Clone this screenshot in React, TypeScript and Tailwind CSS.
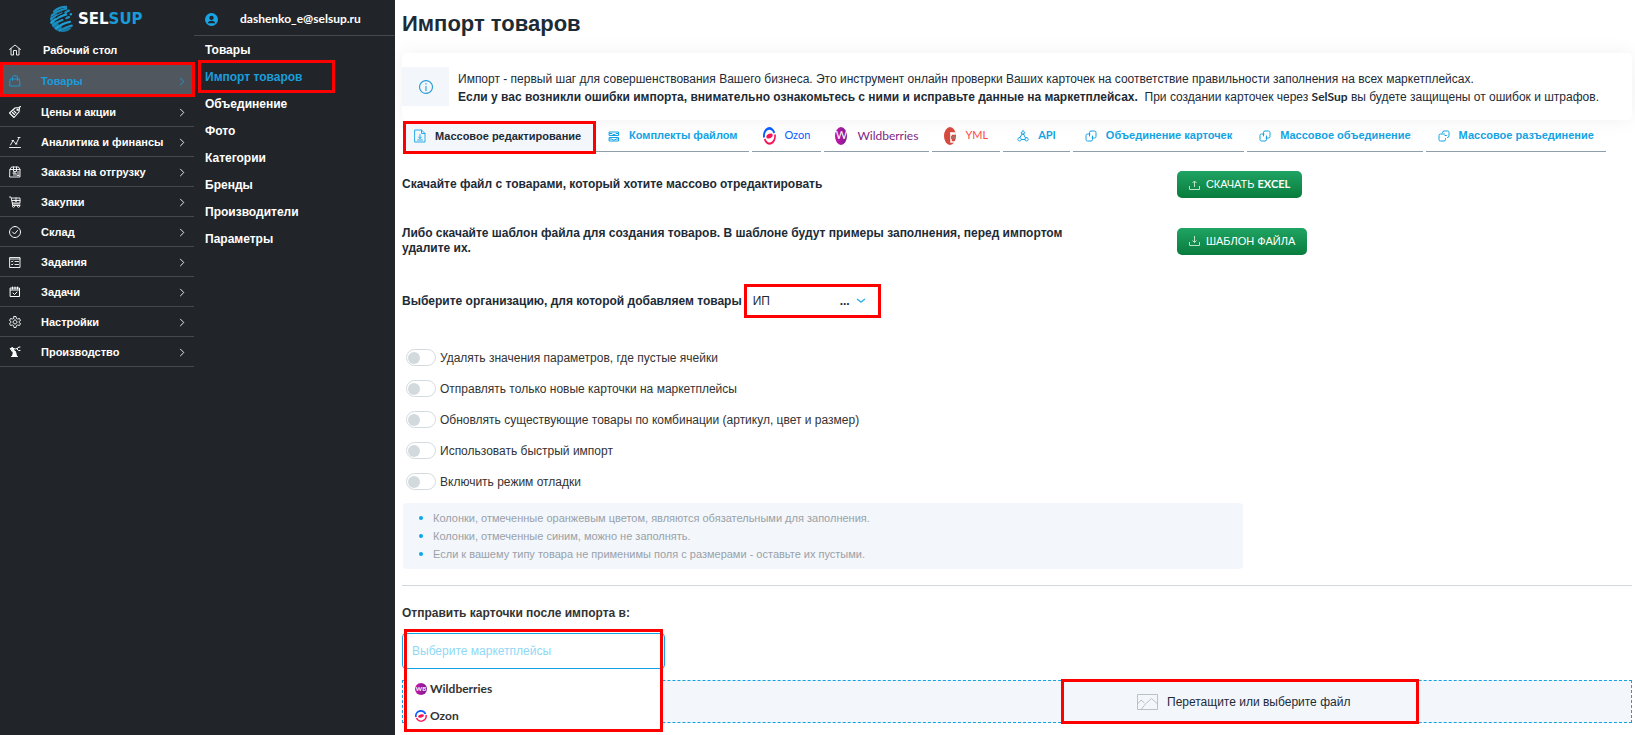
import { useState } from "react";
import type { ReactNode } from "react";

type MenuItem = { label: string; icon: ReactNode; active?: boolean };

function Icon({ children, className = "h-[12px] w-[12px]" }: { children: ReactNode; className?: string }) {
  return (
    <svg
      viewBox="0 0 24 24"
      className={className}
      fill="none"
      stroke="currentColor"
      strokeWidth="1.8"
      strokeLinecap="round"
      strokeLinejoin="round"
      aria-hidden="true"
    >
      {children}
    </svg>
  );
}

const menu: MenuItem[] = [
  {
    label: "Товары",
    active: true,
    icon: <path d="M3 8h18l1 14H2zM7 11V5a5 4 0 0 1 10 0v6" />,
  },
  {
    label: "Цены и акции",
    icon: <path d="M1 14 12 4l8-1 1 1-1 8-10 11zM16 6.500h2v2h-2zM7 13l4 4M10 10l4 4M20 3l3-2" strokeWidth="2.200" />,
  },
  {
    label: "Аналитика и финансы",
    icon: <path d="M1 23h22M3 18l5-9 6 7 6-12M6 9h3M13 16h3M18 3h4" />,
  },
  {
    label: "Заказы на отгрузку",
    icon: <path d="M2 7l3-5h14l3 5v15H2zM2 7h20M9 2v9h6V2M8 14h6v5M10 14v5M17 12h3M17 16h3M17 19h3" />,
  },
  {
    label: "Закупки",
    icon: <path d="M1 2h3l3 14h15M6 4h16v10H7M6 9h16M14 4v7M11 8l3 3 3-3M7 16v3h15M9 19a2 2 0 1 0 .1 0M19 19a2 2 0 1 0 .1 0" />,
  },
  {
    label: "Склад",
    icon: <path d="M12 1a11 11 0 1 0 .1 0M7 12l4 4 6-7" strokeWidth="2" />,
  },
  {
    label: "Задания",
    icon: <path d="M2 3h20v20H2zM2 6h20M5 11l1 1 2-2M5 17l1 1 2-2M12 11h7M12 17h7" />,
  },
  {
    label: "Задачи",
    icon: <path d="M3 4h18v17H3zM3 8h18M7 2v4M12 2v4M17 2v4M8 14l3 3 5-5" strokeWidth="2" />,
  },
  {
    label: "Настройки",
    icon: (
      <path d="M10 1h4l1 4 2 1 4-1 2 4-3 2v2l3 2-2 4-4-1-2 1-1 4h-4l-1-4-2-1-4 1-2-4 3-2v-2L1 9l2-4 4 1 2-1zM12 8a4 4 0 1 0 .1 0" />
    ),
  },
  {
    label: "Производство",
    icon: (
      <g strokeWidth="2">
        <path d="M5 21h12M7 20l2-8 4-1 2 9zM3 5l4-2 5 9-3 1z" fill="currentColor" />
        <path d="M6 4l7 2 3-1M22 2l-4 1-2 3 3 3h3" />
      </g>
    ),
  },
];

const subMenu = [
  "Товары",
  "Импорт товаров",
  "Объединение",
  "Фото",
  "Категории",
  "Бренды",
  "Производители",
  "Параметры",
];

const options = [
  "Удалять значения параметров, где пустые ячейки",
  "Отправлять только новые карточки на маркетплейсы",
  "Обновлять существующие товары по комбинации (артикул, цвет и размер)",
  "Использовать быстрый импорт",
  "Включить режим отладки",
];

const notes = [
  "Колонки, отмеченные оранжевым цветом, являются обязательными для заполнения.",
  "Колонки, отмеченные синим, можно не заполнять.",
  "Если к вашему типу товара не применимы поля с размерами - оставьте их пустыми.",
];

function Logo() {
  return (
    <a href="#" className="flex h-[35px] items-center pt-[2px] pl-[48px]" aria-label="SELSUP">
      <svg viewBox="0 0 28 30" className="h-[28px] w-[27px]" aria-hidden="true">
        <path d="M3 9C0 17 4 28 15 29c4 0 8-2 10-5l-9 1-5-5-6-3z" fill="#1779a5" />
        <g fill="none" stroke="#1c8fc0" strokeLinecap="round" strokeWidth="2.400">
          <path d="M6 7c4-4 8-5 13-5" />
          <path d="M4 11C9 6 14 5 19 4" />
          <path d="M3 15c5-5 8-6 11-7M18 8l4-2" />
          <path d="M3 19c5-5 9-7 16-9" stroke="#1c9fd4" />
          <path d="M5 22c4-4 6-5 10-6M19 14l3-1" />
          <path d="M8 25c5-4 9-6 15-7" stroke="#1c9fd4" />
          <path d="M12 27c5-3 8-4 13-5" />
        </g>
        <g fill="none" stroke="#212529" strokeWidth="1">
          <path d="M9 10c4-2 6-3 9-4" />
          <path d="M8 14c3-3 6-4 9-5" />
          <path d="M9 17c3-2 6-3 10-4" />
          <path d="M11 21c3-2 6-4 10-5" />
          <path d="M14 25c3-2 6-3 10-5" />
        </g>
        <circle cx="24" cy="10" r="1.300" fill="#1c9fd4" />
      </svg>
      <span className="pl-[3px] font-['DejaVu_Sans',sans-serif] text-[15px] leading-4 font-bold text-white">
        SEL<span className="text-[#189bd7]">SUP</span>
      </span>
    </a>
  );
}

function Chevron() {
  return (
    <svg viewBox="0 0 6 10" className="h-[9px] w-[6px]" fill="none" stroke="currentColor" aria-hidden="true">
      <path d="M1 1l4 4-4 4" />
    </svg>
  );
}

function Sidebar() {
  return (
    <nav className="w-[194px] shrink-0 text-[11px] font-bold text-white">
      <Logo />
      <a href="#" className="flex h-[27px] items-center pt-[3px] pl-[9px]">
        <Icon>
          <path d="M1 11 12 2l11 9M4 9v13h5v-9h6v9h5V9" />
        </Icon>
        <span className="pl-[22px]">Рабочий стол</span>
      </a>
      {menu.map((item) => (
        <a
          key={item.label}
          href="#"
          className={
            item.active
              ? "flex h-[35px] w-[195px] items-center bg-[#50575f] pt-[3px] pr-[10px] pl-[9px] text-[#1b9ddb] outline-3 -outline-offset-3 outline-[#ff0000]"
              : "flex h-[30px] items-center border-b border-[#45494d] pt-px pr-[9px] pl-[9px]"
          }
        >
          <Icon>{item.icon}</Icon>
          <span className="flex-1 pl-[20px]">{item.label}</span>
          <Chevron />
        </a>
      ))}
    </nav>
  );
}

function SubSidebar() {
  return (
    <div className="w-[201px] shrink-0 text-[12px] font-bold text-white">
      <a
        href="#"
        className="flex h-[36px] items-center border-b border-[#45494d] pt-[3px] pl-[11px] font-[Lato,sans-serif]"
      >
        <svg viewBox="0 0 12 12" className="h-[13px] w-[13px]" aria-hidden="true">
          <circle cx="6" cy="6" r="6" fill="#17a5e6" />
          <circle cx="6" cy="4.500" r="2" fill="#212529" />
          <path d="M2.500 9.500c1-3 6-3 7 0" fill="#212529" />
        </svg>
        <span className="pl-[22px]">dashenko_e@selsup.ru</span>
      </a>
      {subMenu.map((label) => (
        <a
          key={label}
          href="#"
          className={
            label === "Импорт товаров"
              ? "ml-[7px] flex h-[27px] w-[131px] items-center pl-[4px] text-[#1b9ddb] outline-3 outline-[#ff0000]"
              : "flex h-[27px] items-center pl-[11px]"
          }
        >
          {label}
        </a>
      ))}
    </div>
  );
}

function OzonMark({ className }: { className: string }) {
  return (
    <svg viewBox="0 0 24 24" preserveAspectRatio="none" className={className} aria-hidden="true">
      <circle cx="12" cy="12" r="12" fill="#fff" />
      <path d="M2 14A10 10 0 0 1 21 8" fill="none" stroke="#0b5cff" strokeWidth="3.500" />
      <path d="M3 16a10 10 0 0 0 19-6" fill="none" stroke="#f91155" strokeWidth="3" />
      <ellipse cx="12" cy="12" rx="6" ry="3" fill="#f91155" transform="rotate(-15 12 12)" />
    </svg>
  );
}

function WildberriesMark({ className, text }: { className: string; text: string }) {
  return (
    <span
      className={`flex items-center justify-center rounded-[50%] bg-linear-to-r from-[#cb11ab] to-[#7b1b8f] font-[Lato,sans-serif] text-white ${className}`}
      aria-hidden="true"
    >
      {text}
    </span>
  );
}

const linkIcon = (
  <Icon>
    <path
      d="M9 12V5a3 3 0 0 1 3-3h7a3 3 0 0 1 3 3v8a3 3 0 0 1-3 3h-5M15 12v7a3 3 0 0 1-3 3H5a3 3 0 0 1-3-3v-8a3 3 0 0 1 3-3h5"
      strokeWidth="2"
    />
  </Icon>
);

const splitIcon = (
  <Icon>
    <path
      d="M9 5a3 3 0 0 1 3-3h7a3 3 0 0 1 3 3v7a3 3 0 0 1-3 3M15 17v2a3 3 0 0 1-3 3H5a3 3 0 0 1-3-3v-8a3 3 0 0 1 3-3h8M14 11h3"
      strokeWidth="2"
    />
  </Icon>
);

const tabs = [
  {
    label: "Комплекты файлом",
    color: "text-[#13a3e4] font-bold px-[12px] gap-[9px]",
    icon: (
      <Icon>
        <path d="M3 4h18v7H3zM3 15h18v7H3zM3 7h5l2 2h4l2-2h5M3 18h5l2 2h4l2-2h5" strokeWidth="2" />
      </Icon>
    ),
  },
  {
    label: "Ozon",
    color: "text-[#0b5cff] font-[Lato,sans-serif] px-[11px] gap-[8px]",
    icon: <OzonMark className="h-[18px] w-[13px]" />,
  },
  {
    label: "Wildberries",
    color: "text-[12px] text-[#7e1f86] font-[Lato,sans-serif] px-[11px] gap-[10px]",
    icon: <WildberriesMark className="h-[18px] w-[12px] text-[11px]" text="W" />,
  },
  {
    label: "YML",
    color: "text-[#fb4b40] font-[Lato,sans-serif] px-[12px] gap-[9px]",
    icon: (
      <svg viewBox="0 0 12 18" className="h-[18px] w-[12px]" aria-hidden="true">
        <ellipse cx="6" cy="9" rx="6" ry="9" fill="#d6493e" />
        <path d="M6 6h5v1H7v8h4" fill="none" stroke="#fff" strokeWidth="1.500" />
        <path d="M7 9h4v3H7z" fill="#b06a60" />
      </svg>
    ),
  },
  {
    label: "API",
    color: "text-[#13a3e4] font-[Lato,sans-serif] font-bold px-[14px] gap-[9px]",
    icon: (
      <Icon>
        <path
          d="M12 2a3.500 3.500 0 1 0 .1 0M5 15a3.500 3.500 0 1 0 .1 0M19 15a3.500 3.500 0 1 0 .1 0M10 8 6 15M12 6l5 10M9 19h7"
          strokeWidth="2"
        />
      </Icon>
    ),
  },
  { label: "Объединение карточек", color: "text-[#13a3e4] font-bold px-[12px] gap-[9px]", icon: linkIcon },
  { label: "Массовое объединение", color: "text-[#13a3e4] font-bold px-[12px] gap-[9px]", icon: linkIcon },
  { label: "Массовое разъединение", color: "text-[#13a3e4] font-bold px-[12px] gap-[9px]", icon: splitIcon },
];

function Tabs() {
  return (
    <div className="flex h-[32px] items-stretch gap-[3px] text-[11px] whitespace-nowrap">
      <button
        type="button"
        className="mt-px -mr-[3px] -mb-[2px] ml-px flex w-[193px] items-center gap-[9px] bg-[#f3f6fb] pb-[3px] pl-[11px] font-bold text-[#1d2b36] outline-3 -outline-offset-3 outline-[#ff0000]"
      >
        <Icon className="h-[16px] w-[12px]">
          <g stroke="#13a3e4">
            <path d="M2 0h13l7 7v17H2zM15 0v7h7M12 9v8M9 14l3 3 3-3M7 20h10" />
          </g>
        </Icon>
        Массовое редактирование
      </button>
      {tabs.map((tab) => (
        <button key={tab.label} type="button" className={`flex items-center border-b border-[#8f9ea9] ${tab.color}`}>
          {tab.icon}
          {tab.label}
        </button>
      ))}
    </div>
  );
}

function GreenButton({ children, up }: { children: ReactNode; up?: boolean }) {
  return (
    <button
      type="button"
      className="flex h-[27px] items-center gap-[6px] rounded-[5px] bg-linear-to-b from-[#1fa463] to-[#087c3d] px-[12px] text-[11px] whitespace-nowrap text-white"
    >
      <svg viewBox="0 0 11 10" className="h-[10px] w-[11px]" fill="none" stroke="#b9e3cb" aria-hidden="true">
        <path d={up ? "M.5 6v3.500h10V6M5.500 7V1M3.500 3l2-2 2 2" : "M.5 6v3.500h10V6M5.500 0v6.500M3.500 4.500l2 2 2-2"} />
      </svg>
      <span>{children}</span>
    </button>
  );
}

export default function App() {
  const [checked, setChecked] = useState<string[]>([]);

  function toggle(label: string) {
    setChecked((list) => (list.includes(label) ? list.filter((x) => x !== label) : [...list, label]));
  }

  return (
    <div className="flex min-h-screen bg-white font-['Liberation_Sans',Arial,sans-serif] text-[12px] text-[#1d2b36]">
      <div className="flex shrink-0 bg-[#212529]">
        <Sidebar />
        <SubSidebar />
      </div>

      <main className="min-w-0 flex-1 overflow-hidden pr-[3px] pl-[7px]">
        <h1 className="pt-[8px] text-[22px] leading-8 font-bold">Импорт товаров</h1>

        <section className="mt-[13px] flex items-center gap-[9px] rounded-[5px] py-[14px] shadow-[0_0_20px_rgba(0,0,0,0.06)]">
          <div className="flex h-[39px] w-[47px] shrink-0 items-center justify-center bg-[#f3f6fb] text-[#2f9fd8]">
            <Icon className="h-[14px] w-[14px]">
              <path d="M12 1a11 11 0 1 0 .1 0M12 11v7M12 6v1" strokeWidth="2" />
            </Icon>
          </div>
          <p className="pt-[4px] leading-[17px]">
            Импорт - первый шаг для совершенствования Вашего бизнеса. Это инструмент онлайн проверки Ваших карточек на
            соответствие правильности заполнения на всех маркетплейсах.
            <br />
            <b>
              Если у вас возникли ошибки импорта, внимательно ознакомьтесь с ними и исправьте данные на
              маркетплейсах.
            </b>
            &nbsp; При создании карточек через <b className="font-[Lato,sans-serif]">SelSup</b> вы будете защищены от
            ошибок и штрафов.
          </p>
        </section>

        <Tabs />

        <div className="mt-[19px] flex items-center">
          <p className="w-[63%] shrink-0 pr-24 leading-[15px] font-bold">
            Скачайте файл с товарами, который хотите массово отредактировать
          </p>
          <GreenButton up>
            СКАЧАТЬ <span className="font-[Lato,sans-serif] font-bold">EXCEL</span>
          </GreenButton>
        </div>

        <div className="mt-[28px] flex items-center">
          <p className="w-[63%] shrink-0 pr-24 leading-[15px] font-bold">
            Либо скачайте шаблон файла для создания товаров. В шаблоне будут примеры заполнения, перед импортом удалите
            их.
          </p>
          <GreenButton>ШАБЛОН ФАЙЛА</GreenButton>
        </div>

        <div className="mt-[28px] flex items-center gap-[2px]">
          <label htmlFor="org" className="font-bold">
            Выберите организацию, для которой добавляем товары
          </label>
          <div className="relative h-[34px] w-[137px] border-3 border-[#ff0000]">
            <select id="org" className="h-full w-full appearance-none bg-white pl-[6px] text-[12px] outline-none">
              <option>ИП</option>
            </select>
            <span className="pointer-events-none absolute inset-y-0 right-[12px] flex items-center gap-[6px] font-bold">
              ...
              <svg viewBox="0 0 10 6" className="h-[6px] w-[10px]" fill="none" stroke="#35b3ea" aria-hidden="true">
                <path d="M1 1l4 3 4-3" strokeWidth="1.500" />
              </svg>
            </span>
          </div>
        </div>

        <div className="mt-[24px] pl-[4px] text-[#333]">
          {options.map((label) => (
            <label key={label} className="flex h-[31px] items-center gap-[4px]">
              <input
                type="checkbox"
                className="peer sr-only"
                checked={checked.includes(label)}
                onChange={() => toggle(label)}
              />
              <span className="flex h-[17px] w-[30px] shrink-0 items-center rounded-full border border-[#d3dade] bg-white px-px peer-checked:justify-end peer-checked:bg-[#d5effb]">
                <span className="h-[12px] w-[12px] rounded-full bg-[#d3dade]" />
              </span>
              {label}
            </label>
          ))}
        </div>

        <ul className="mt-[6px] ml-px max-w-[840px] rounded-[4px] bg-[#f3f6fb] py-[6px] pl-[16px] text-[11px] leading-[18px] text-[#99a1a8]">
          {notes.map((note) => (
            <li key={note} className="flex items-center gap-[10px]">
              <span className="h-[4px] w-[4px] rounded-full bg-[#09a6ea]" />
              {note}
            </li>
          ))}
        </ul>

        <hr className="mt-[16px] border-[#d3dade]" />

        <label htmlFor="markets" className="mt-[19px] block leading-4 font-bold text-[#333]">
          Отправить карточки после импорта в:
        </label>

        <div className="relative mt-[12px] w-[263px]">
          <input
            id="markets"
            placeholder="Выберите маркетплейсы"
            className="block h-[36px] w-full rounded-[4px] border border-[#13a3e4] px-[9px] outline-none placeholder:text-[#8fd9f6]"
          />
          <div className="pointer-events-none absolute top-[-4px] left-[2px] z-10 h-[103px] w-[259px] border-3 border-[#ff0000]">
            <ul className="mt-[37px] bg-white px-[8px] pt-[6px] font-[Lato,sans-serif] text-[#333]">
              <li className="flex h-[27px] items-center gap-[3px] font-bold">
                <WildberriesMark className="h-[12px] w-[12px] text-[6px]" text="WB" />
                Wildberries
              </li>
              <li className="flex h-[27px] items-center gap-[3px] font-bold">
                <OzonMark className="h-[12px] w-[12px]" />
                Ozon
              </li>
            </ul>
          </div>
        </div>

        <div className="mt-[11px] mb-[8px] flex justify-center border border-dashed border-[#13a3e4] bg-[#f3f6fb] pl-[446px]">
          <button
            type="button"
            className="-my-[2px] flex h-[45px] w-[358px] items-center gap-[9px] border-3 border-[#ff0000] pl-[73px]"
          >
            <svg viewBox="0 0 21 16" className="h-[16px] w-[21px]" fill="none" stroke="#bac2c9" aria-hidden="true">
              <path d="M.5.5h20v15H.500zM.5 10l3.500-4 3.500 3M4 15.500l5-6 5.500-5 6 5.500" />
            </svg>
            Перетащите или выберите файл
          </button>
        </div>
      </main>
    </div>
  );
}
